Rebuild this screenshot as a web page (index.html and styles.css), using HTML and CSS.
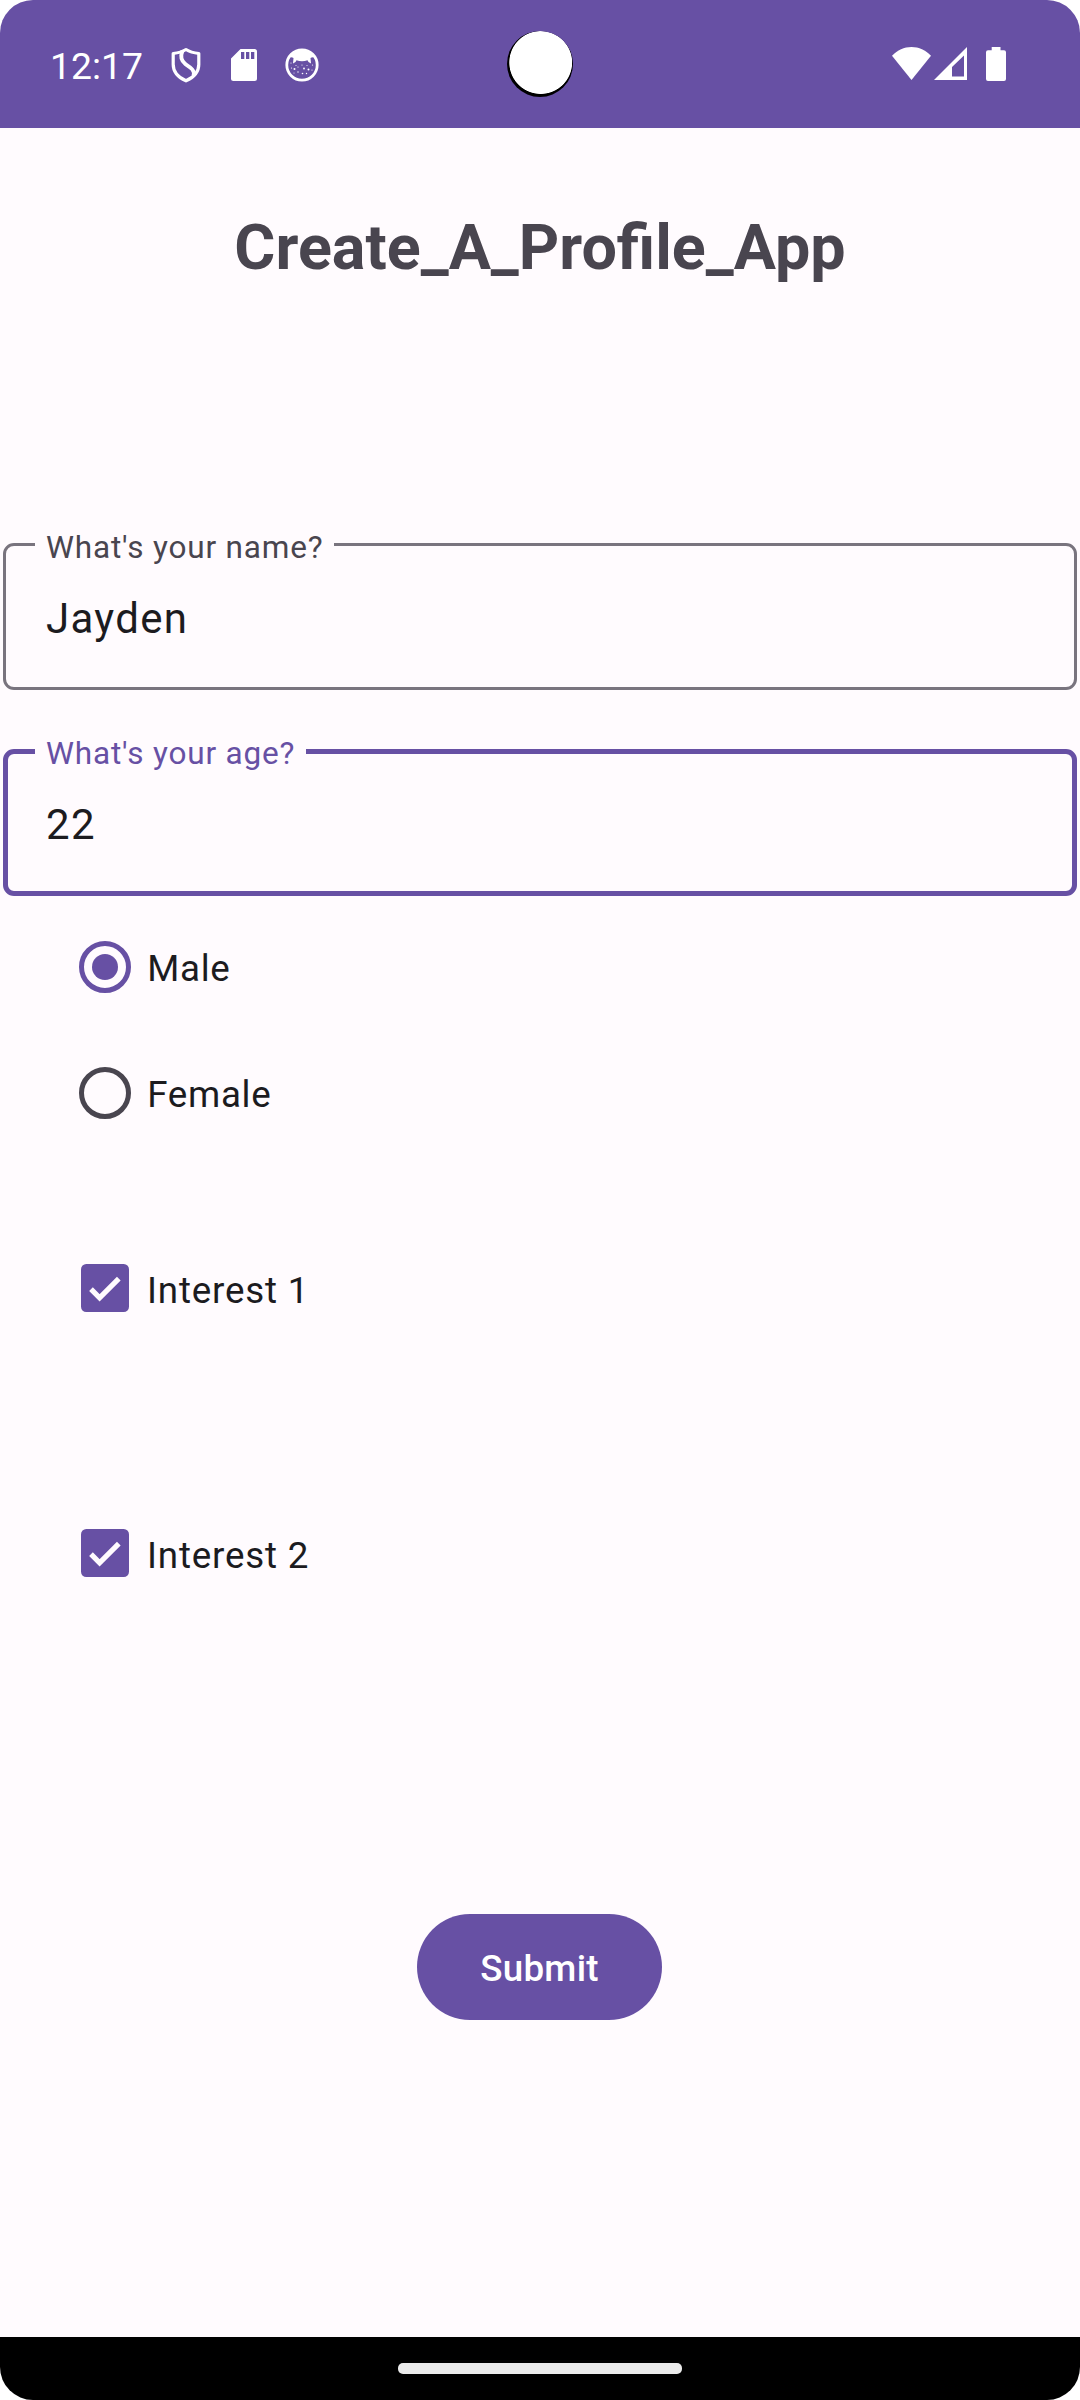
FILE: index.html
```html
<!DOCTYPE html>
<html lang="en">
<head>
<meta charset="utf-8">
<title>Create_A_Profile_App</title>
<link rel="stylesheet" href="styles.css">
</head>
<body>
<div class="screen">
  <header class="status-bar">
    <span class="clock">12:17</span>
    <svg class="icon-shield" width="30" height="36" viewBox="0 0 30 36" fill="none" stroke="#fff" stroke-width="3.200" stroke-linejoin="round">
      <path d="M15 2.500C11.500 4.700 7.500 5.900 2.200 6.500V17.500C2.200 25 7.500 30.500 15 33.800C22.500 30.500 27.800 25 27.800 17.500V6.500C22.500 5.900 18.500 4.700 15 2.500Z"/>
      <path d="M11.500 3.800C8.500 11 11 14.500 14.500 17.200C19.500 20.500 24 23 22.500 28.500" stroke-width="3.800"/>
    </svg>
    <svg class="icon-sd" width="26" height="32" viewBox="0 0 26 32">
      <path fill="#fff" fill-rule="evenodd" d="M9.500 0H23.500A2.500 2.500 0 0 1 26 2.500V29.500A2.500 2.500 0 0 1 23.500 32H2.500A2.500 2.500 0 0 1 0 29.500V9.500ZM10 3V10H13.300V3ZM15 3V10H18.300V3ZM20 3V10H23.300V3Z"/>
    </svg>
    <svg class="icon-face" width="34" height="34" viewBox="0 0 34 34">
      <circle cx="17" cy="17" r="15.200" fill="none" stroke="#fff" stroke-width="2.800"/>
      <path fill="#fff" d="M4 9.500C8 3.500 12 1.500 17 1.500S26 3.500 30 9.500C28 9 26.500 9.200 25.500 10L26 15.500L23.500 14L22.500 12.200C19 13.500 15 13.500 11.500 12.200L10.500 14L8 15.500L8.500 10C7.500 9.200 6 9 4 9.500Z"/>
      <g fill="#fff">
        <circle cx="6" cy="15" r=".6"/><circle cx="6.500" cy="20" r=".6"/><circle cx="9.500" cy="21" r="1"/><circle cx="11" cy="17.500" r=".5"/><circle cx="13" cy="19" r=".6"/><circle cx="17" cy="17" r=".6"/><circle cx="19" cy="20.500" r=".9"/><circle cx="23.500" cy="21.500" r="1"/><circle cx="22" cy="17.500" r=".5"/><circle cx="27.500" cy="17" r=".6"/><circle cx="27" cy="22" r=".6"/><circle cx="9" cy="25" r=".5"/><circle cx="13" cy="24" r=".7"/><circle cx="17.500" cy="25.500" r=".8"/><circle cx="21.500" cy="25.500" r=".7"/>
      </g>
    </svg>
    <span class="camera"></span>
    <svg class="icon-wifi" width="39" height="33" viewBox="0 0 39 33">
      <path fill="#fff" d="M0 8.800C5.500 3 12 0 19.500 0S33.500 3 39 8.800L19.500 33Z"/>
    </svg>
    <svg class="icon-signal" width="33" height="33" viewBox="0 0 33 33">
      <path fill="#fff" fill-rule="evenodd" d="M33 0V33H0ZM30 8.500L18 20V29.500H30Z"/>
    </svg>
    <svg class="icon-battery" width="20" height="34" viewBox="0 0 20 34">
      <path fill="#fff" d="M5.700 0H14.500V3.300H18A2 2 0 0 1 20 5.300V32A2 2 0 0 1 18 34H2A2 2 0 0 1 0 32V5.300A2 2 0 0 1 2 3.300H5.700Z"/>
    </svg>
  </header>

  <main class="content">
    <h1 class="title">Create_A_Profile_App</h1>

    <fieldset class="field">
      <legend class="field-label">What's your name?</legend>
      <div class="field-value">Jayden</div>
    </fieldset>
    <fieldset class="field field-focused">
      <legend class="field-label">What's your age?</legend>
      <div class="field-value">22</div>
    </fieldset>

    <div class="options">
      <div class="option">
        <span class="radio radio-checked"></span>
        <span class="option-text">Male</span>
      </div>
      <div class="option">
        <span class="radio"></span>
        <span class="option-text">Female</span>
      </div>
    </div>

    <div class="interests">
      <div class="option">
        <svg class="checkbox" width="48" height="48" viewBox="0 0 48 48"><rect width="48" height="48" rx="5.250" fill="#6750a4"/><path d="M10 25.200L18.600 33.800L37.800 14.600" fill="none" stroke="#fffbfe" stroke-width="5.200"/></svg>
        <span class="option-text">Interest 1</span>
      </div>
      <div class="option">
        <svg class="checkbox" width="48" height="48" viewBox="0 0 48 48"><rect width="48" height="48" rx="5.250" fill="#6750a4"/><path d="M10 25.200L18.600 33.800L37.800 14.600" fill="none" stroke="#fffbfe" stroke-width="5.200"/></svg>
        <span class="option-text">Interest 2</span>
      </div>
    </div>

    <button class="submit" type="button">Submit</button>
  </main>

  <footer class="nav-bar"><span class="nav-handle"></span></footer>
</div>
</body>
</html>
```
FILE: styles.css
```css
* {
  box-sizing: border-box;
}

body {
  margin: 0;
  background: #fff;
  font-family: Roboto, sans-serif;
  color: #1c1b1f;
}

.screen {
  display: flex;
  flex-direction: column;
  width: 1080px;
  height: 2400px;
  overflow: hidden;
  border-radius: 33px;
  background: #fffbfe;
}

.status-bar {
  position: relative;
  display: flex;
  align-items: flex-start;
  height: 128px;
  padding: 47px 74px 0 50px;
  background: #6750a4;
}

.status-bar svg {
  flex: none;
}

.clock {
  width: 121px;
  margin-top: -2px;
  font-size: 37.3px;
  line-height: 43px;
  color: #fff;
}

.icon-sd {
  margin: 2px 0 0 30px;
}

.icon-face {
  margin: 1px 0 0 28px;
}

/* Front camera cut-out */
.camera {
  position: absolute;
  top: 31px;
  left: 507px;
  width: 66px;
  height: 66px;
  border-radius: 50%;
  background: radial-gradient(circle at 33.7px 31.5px, #fff 31px, #000 31.8px);
}

.icon-wifi {
  margin-left: auto;
}

.icon-signal {
  margin-left: 3px;
}

.icon-battery {
  margin-left: 19px;
}

.content {
  display: flex;
  flex: 1;
  flex-direction: column;
}

.title {
  margin: 83px 0 0;
  font-size: 62.85px;
  font-weight: 700;
  line-height: 74px;
  text-align: center;
  color: #49454f;
}

.field {
  height: 167px;
  min-width: 0;
  margin: 238px 3px 0;
  padding: 0 0 0 32px;
  border: 3px solid #79747e;
  border-radius: 11px;
}

.field-label {
  margin-left: -3px;
  padding: 5.6px 11px 0;
  font-size: 31.5px;
  line-height: 37px;
  letter-spacing: 0.83px;
  color: #49454f;
}

.field-value {
  padding: 28px 0 0 8px;
  font-size: 42px;
  line-height: 49px;
  letter-spacing: 1.3px;
}

.field-focused {
  height: 165px;
  margin-top: 41px;
  padding-left: 30px;
  border: 5px solid #6750a4;
}

.field-focused .field-label {
  padding-top: 3.6px;
  color: #6750a4;
}

.options {
  display: grid;
  grid-auto-rows: 126px;
  margin-top: 8px;
}

.option {
  display: flex;
  align-items: center;
  padding-left: 78.75px;
}

.option-text {
  margin-left: 16px;
  padding-top: 4px;
  font-size: 36.75px;
  line-height: 44px;
  letter-spacing: 0.66px;
}

.radio {
  display: grid;
  place-items: center;
  width: 52.5px;
  height: 52.5px;
  border: 5.25px solid #49454f;
  border-radius: 50%;
}

.radio-checked {
  border-color: #6750a4;
}

.radio-checked::after {
  content: "";
  width: 26px;
  height: 26px;
  border-radius: 50%;
  background: #6750a4;
}

.interests {
  display: grid;
  grid-auto-rows: 126px;
  row-gap: 139px;
  margin-top: 69px;
}

.interests .option-text {
  padding-top: 6px;
  letter-spacing: 0.8px;
}

.checkbox {
  margin: 0 2px 0 2.25px;
}

.submit {
  align-self: center;
  width: 245px;
  height: 106px;
  margin-top: 298px;
  margin-right: 1px;
  padding: 2px 0 0;
  border: 0;
  border-radius: 53px;
  background: #6750a4;
  font-family: inherit;
  font-size: 36.75px;
  font-weight: 500;
  letter-spacing: 0.26px;
  color: #fff;
}

.nav-bar {
  display: flex;
  justify-content: center;
  height: 63px;
  padding-top: 26px;
  background: #000;
}

.nav-handle {
  width: 284px;
  height: 11px;
  border-radius: 5px;
  background: #ebebeb;
}
```
